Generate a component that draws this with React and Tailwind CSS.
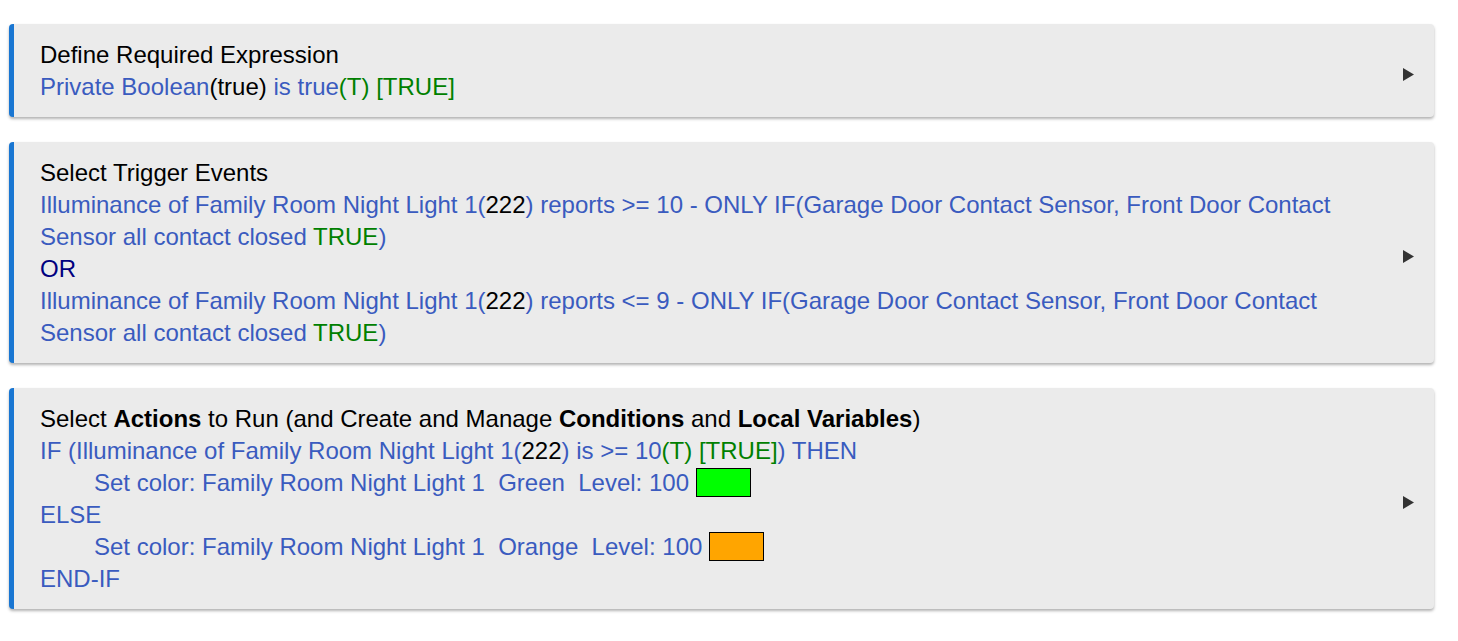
import React from "react";

const blue = "text-[#3a5bbf]";
const green = "text-[#008000]";

function Arrow() {
  return (
    <svg width="11" height="13" viewBox="0 0 11 13" className="block">
      <polygon points="0,0 11,6.5 0,13" fill="#333333" />
    </svg>
  );
}

function Card({ children }) {
  return (
    <div className="flex items-center rounded-[4px] border-l-[5px] border-[#1976d2] bg-[#ebebeb] shadow-[0_2px_3px_rgba(0,0,0,0.3)]">
      <div className="flex-1 pl-[26px] pt-[15px] pb-[14px]">{children}</div>
      <div className="flex w-[60px] justify-end pr-[20px] pt-[8px]">
        <Arrow />
      </div>
    </div>
  );
}

export default function App() {
  return (
    <div className="min-h-screen bg-white pt-[24px] pl-[9px] pr-[24px] font-['Liberation_Sans',Arial,sans-serif] text-[24px] leading-[32px] text-black">
      <div className="flex flex-col gap-[25px]">
        {/* Required expression */}
        <Card>
          <div>Define Required Expression</div>
          <div className={blue}>
            Private Boolean<span className="text-black">(true)</span> is true
            <span className={green}>(T) [TRUE]</span>
          </div>
        </Card>

        {/* Triggers */}
        <Card>
          <div>Select Trigger Events</div>
          <div className={blue}>
            Illuminance of Family Room Night Light 1(
            <span className="text-black">222</span>) reports &gt;= 10 - ONLY
            IF(Garage Door Contact Sensor, Front Door Contact Sensor all contact
            closed <span className={green}>TRUE</span>)
          </div>
          <div className="text-[#000080]">OR</div>
          <div className={blue}>
            Illuminance of Family Room Night Light 1(
            <span className="text-black">222</span>) reports &lt;= 9 - ONLY
            IF(Garage Door Contact Sensor, Front Door Contact Sensor all contact
            closed <span className={green}>TRUE</span>)
          </div>
        </Card>

        {/* Actions */}
        <Card>
          <div>
            Select <b>Actions</b> to Run (and Create and Manage{" "}
            <b>Conditions</b> and <b>Local Variables</b>)
          </div>
          <div className={blue}>
            IF (Illuminance of Family Room Night Light 1(
            <span className="text-black">222</span>) is &gt;= 10
            <span className={green}>(T) [TRUE]</span>) THEN
          </div>
          <div className={`${blue} pl-[54px]`}>
            Set color: Family Room Night Light 1{"\u00a0 "}Green{"\u00a0 "}Level: 100{" "}
            <span className="inline-block h-[29px] w-[55px] border border-black bg-[#00ff00] align-[-6px]" />
          </div>
          <div className={blue}>ELSE</div>
          <div className={`${blue} pl-[54px]`}>
            Set color: Family Room Night Light 1{"\u00a0 "}Orange{"\u00a0 "}Level: 100{" "}
            <span className="inline-block h-[29px] w-[55px] border border-black bg-[#ffa500] align-[-6px]" />
          </div>
          <div className={blue}>END-IF</div>
        </Card>
      </div>
    </div>
  );
}
